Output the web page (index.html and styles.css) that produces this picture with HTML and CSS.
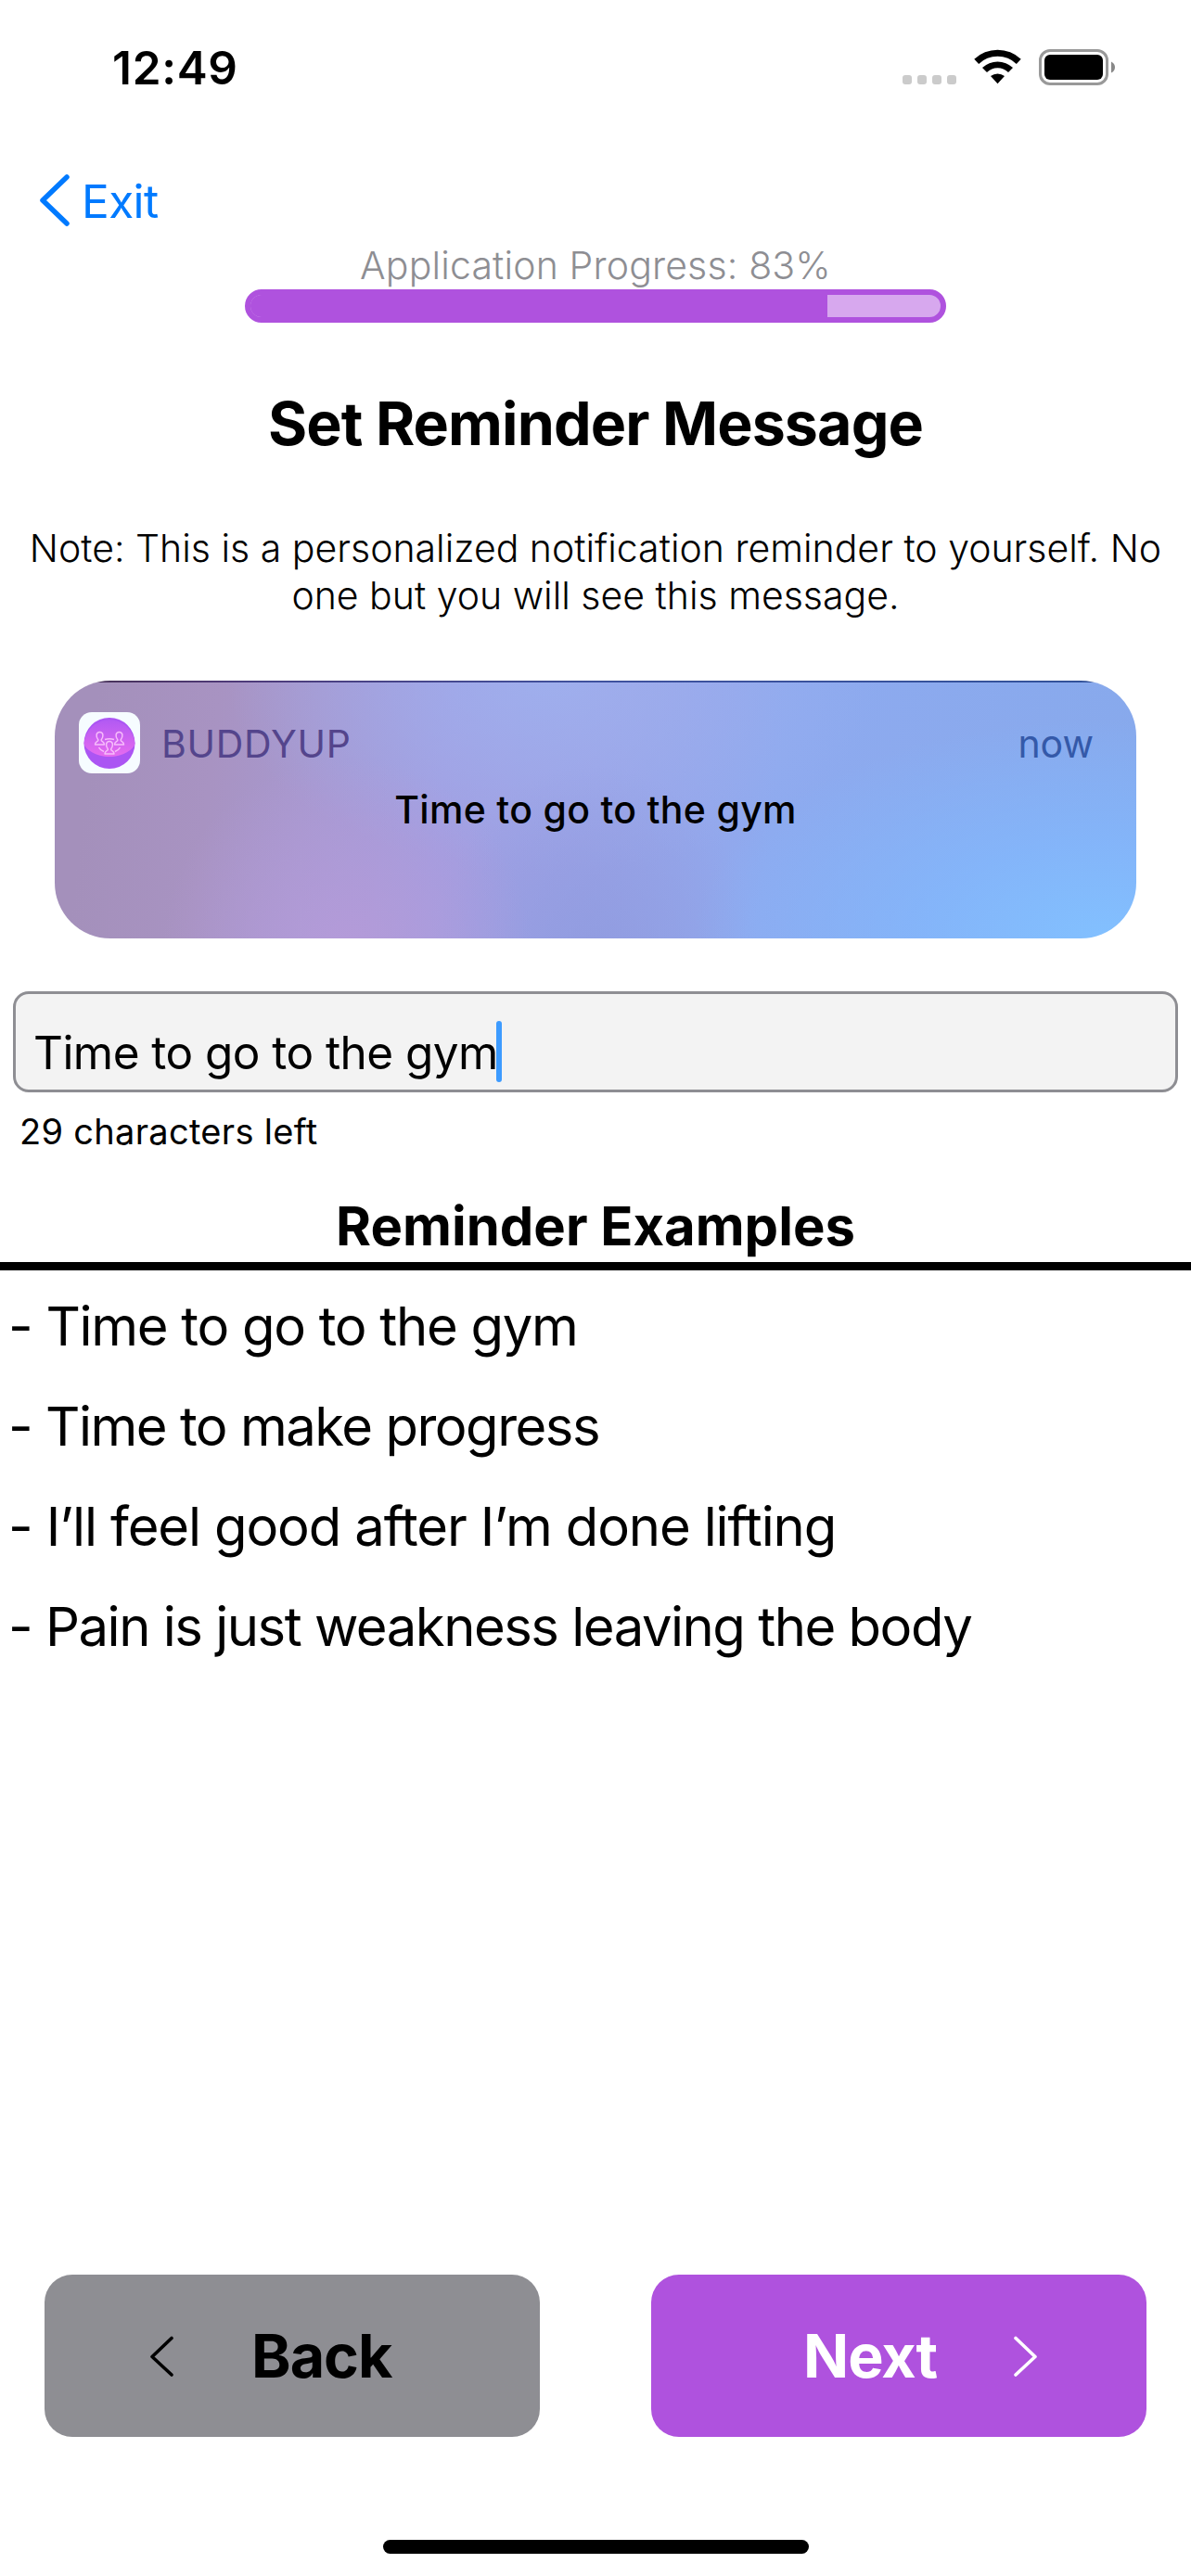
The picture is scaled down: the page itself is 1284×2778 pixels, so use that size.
FILE: index.html
```
<!DOCTYPE html>
<html lang="en">
<head>
<meta charset="utf-8">
<title>Set Reminder Message</title>
<link rel="stylesheet" href="styles.css">
</head>
<body>
<div class="screen">
  <header class="status-bar">
    <span class="time">12:49</span>
    <div class="status-icons">
      <svg class="dots" width="58" height="10" viewBox="0 0 58 10" fill="#cbcbcb"><rect width="10" height="10" rx="3"/><rect x="16" width="10" height="10" rx="3"/><rect x="32" width="10" height="10" rx="3"/><rect x="48" width="10" height="10" rx="3"/></svg>
      <svg class="wifi" width="52" height="38" viewBox="0 0 52 38"><path d="M0.3 10.8A36.6 36.6 0 0 1 50.7 10.8L45.8 16A29 29 0 0 0 5.2 16ZM9 20A24 24 0 0 1 42 20L37 25A16.5 16.5 0 0 0 14 25ZM18 29A12.5 12.5 0 0 1 33 29L25.5 37.2Z"/></svg>
      <svg class="battery" width="83" height="39" viewBox="0 0 83 39"><rect x="1.5" y="1.5" width="72" height="36" rx="10.5" fill="none" stroke="#999" stroke-width="3"/><rect x="6" y="6" width="63" height="27" rx="6"/><path d="M78 13.5Q82 15.5 82 19.5Q82 23.500 78 25.500Z" fill="#888"/></svg>
    </div>
  </header>

  <nav class="nav">
    <svg width="34" height="58" viewBox="0 0 34 58" fill="none" stroke="#007aff" stroke-width="5.5" stroke-linecap="round" stroke-linejoin="round"><path d="M30 4L4 29L30 54"/></svg>
    <a class="exit">Exit</a>
  </nav>

  <section class="progress">
    <span class="progress-label">Application Progress: 83%</span>
    <div class="progress-bar"><div class="progress-fill" style="width:83.600%"></div></div>
  </section>

  <h1 class="title">Set Reminder Message</h1>
  <p class="note">Note: This is a personalized notification reminder to yourself. No<br>one but you will see this message.</p>

  <section class="card">
    <div class="card-head">
      <svg width="66" height="66" viewBox="0 0 66 66">
        <defs>
          <linearGradient id="disc" x1="0" y1="0" x2="0" y2="1"><stop offset="0" stop-color="#b25af3"/><stop offset="1" stop-color="#e66bef"/></linearGradient>
          <path id="person" d="M-1.600 1.500C-4.500-2-4-7 0-7S4.500-2 1.600 1.500C1.500 3.500 5 3 5 6.500H-5C-5 3-1.500 3.500-1.600 1.500Z"/>
        </defs>
        <rect width="66" height="66" rx="14" fill="#f6fcff"/>
        <circle cx="33" cy="33.500" r="27.500" fill="#ab55f3"/>
        <path d="M5.600 33.500A27.500 27.500 0 0 1 60.400 33.500C60 40 47 48 33 48S6 40 5.600 33.500Z" fill="url(#disc)"/>
        <g fill="none" stroke="#f7bdfb" stroke-width="1.500" stroke-linejoin="round">
          <use href="#person" x="22.500" y="28.500"/><use href="#person" x="43.500" y="28.500"/><use href="#person" x="33" y="38.500"/>
          <path d="M28 29.500Q33 28 38 29.500M21.500 38Q23 41 27 42.500M44.500 38Q43 41 39 42.500"/>
        </g>
      </svg>
      <span class="app-name">BUDDYUP</span>
      <span class="when">now</span>
    </div>
    <p class="card-message">Time to go to the gym</p>
  </section>

  <div class="field"><span class="field-text">Time to go to the gym</span><span class="caret"></span></div>
  <p class="remaining">29 characters left</p>

  <h2 class="examples-title">Reminder Examples</h2>
  <ul class="examples">
    <li class="snug">- Time to go to the gym</li>
    <li class="tight">- Time to make progress</li>
    <li>- I’ll feel good after I’m done lifting</li>
    <li class="tight">- Pain is just weakness leaving the body</li>
  </ul>

  <footer class="actions">
    <button class="btn back">
      <svg width="27" height="45" viewBox="0 0 27 45" fill="none" stroke="#000" stroke-width="3.600" stroke-linecap="round" stroke-linejoin="round"><path d="M24 3.500L3 23.500L24 43"/></svg>
      <span>Back</span>
    </button>
    <button class="btn next">
      <span>Next</span>
      <svg width="27" height="45" viewBox="0 0 27 45" fill="none" stroke="#fff" stroke-width="3.600" stroke-linecap="round" stroke-linejoin="round"><path d="M3 3.500L24 23.500L3 43"/></svg>
    </button>
  </footer>
  <div class="home-indicator"></div>
</div>
</body>
</html>
```
FILE: styles.css
```
* { box-sizing: border-box; margin: 0; padding: 0; }
body { background: #fff; color: #000; font-family: Inter, "Liberation Sans", sans-serif; }
svg { display: block; flex: none; }

.screen { width: 1284px; height: 2778px; display: flex; flex-direction: column; overflow: hidden; }

.status-bar { height: 187px; padding: 43px 81px 0 121px; display: flex; justify-content: space-between; align-items: flex-start; }
.time { font-size: 49.5px; font-weight: 600; line-height: 60px; letter-spacing: 0.7px; }
.status-icons { display: flex; align-items: flex-end; padding-top: 10px; }
.dots { margin-bottom: 1px; }
.wifi { margin: 0 18.500px 1px 18.500px; }

.nav { height: 74px; padding-left: 42px; display: flex; align-items: flex-start; }
.exit { margin-left: 12px; color: #007aff; font-size: 49.5px; line-height: 60px; letter-spacing: -0.6px; }

.progress { display: flex; flex-direction: column; align-items: center; }
.progress-label { height: 51px; line-height: 50px; font-size: 41px; font-weight: 300; letter-spacing: 0.15px; color: #8e8e93; }
.progress-bar { width: 756px; height: 36px; border: 6px solid #af52de; border-radius: 18px; background: #d7a8ee; overflow: hidden; }
.progress-fill { height: 100%; background: #af52de; }

.title { margin-top: 69px; font-size: 64.5px; font-weight: 700; line-height: 80px; letter-spacing: -0.9px; text-align: center; }
.note { margin-top: 69px; font-size: 41px; font-weight: 300; line-height: 51px; text-align: center; white-space: nowrap; }

.card {
  height: 278px; margin: 66px 59px 0; padding: 34px 46px 0 26px; border-radius: 60px;
  background:
    linear-gradient(90deg, #473052 0, #4f3a78 16%, #3f529f 50%, #31529a 100%) 0 0 / 100% 2px no-repeat,
    radial-gradient(ellipse 38% 85% at 97% 100%, #82c0ff 0%, rgba(130, 184, 253, .75) 45%, rgba(134, 176, 247, 0) 100%),
    radial-gradient(ellipse 17% 75% at 27% 105%, rgba(181, 155, 217, .95) 0%, rgba(177, 155, 217, 0) 100%),
    radial-gradient(ellipse 15% 75% at 50% 108%, rgba(143, 155, 223, .85) 0%, rgba(147, 157, 225, 0) 100%),
    radial-gradient(ellipse 30% 75% at 46% 0%, rgba(159, 176, 238, .9) 0%, rgba(159, 176, 238, 0) 100%),
    linear-gradient(97deg, #a490bb 4%, #a893c2 15%, #a798cf 24%, #a29de0 36%, #9ba2e6 50%, #8eaaef 66%, #87a9ec 100%);
}
.card-head { display: flex; align-items: center; height: 66px; font-size: 41px; line-height: 50px; }
.app-name { margin: 2px 0 0 23px; color: #54458c; letter-spacing: 0.7px; }
.when { margin: 2px 0 0 auto; color: #3459a9; }
.card-message { margin: 14px -20px 0 0; font-size: 41px; font-weight: 500; line-height: 50px; letter-spacing: 0.3px; text-align: center; }

.field { height: 109px; margin: 57px 14px 0; padding: 20px 0 0 19px; border: 3px solid #8e8e93; border-radius: 17px; background: #f3f3f3; display: flex; align-items: center; }
.field-text { font-size: 49.5px; line-height: 60px; letter-spacing: -0.55px; padding-top: 3px; }
.caret { width: 6px; height: 66px; margin-left: -2px; border-radius: 3px; background: #3d9bff; }

.remaining { margin: 19px 0 0 21px; font-size: 38px; line-height: 46px; letter-spacing: 0.3px; }

.examples-title { height: 83px; margin-top: 44px; border-bottom: 9px solid #000; font-size: 58px; font-weight: 700; line-height: 70px; text-align: center; }
.examples { margin-top: 6px; padding-left: 9px; list-style: none; font-size: 58px; line-height: 108px; letter-spacing: -1.15px; white-space: nowrap; }
.snug { letter-spacing: -1.3px; }
.tight { letter-spacing: -1.5px; }

.actions { margin-top: auto; padding: 0 48px; display: flex; justify-content: space-between; }
.btn { width: 534px; height: 175px; border: 0; border-radius: 30px; display: flex; align-items: center; font: 700 64.5px/80px Inter, "Liberation Sans", sans-serif; letter-spacing: -1px; }
.back { padding-left: 113px; gap: 83px; background: #8e8e93; color: #000; }
.next { padding-left: 164px; gap: 82px; background: #af52de; color: #fff; }

.home-indicator { width: 459px; height: 15px; margin: 111px auto 24px; border-radius: 8px; background: #000; }
```
